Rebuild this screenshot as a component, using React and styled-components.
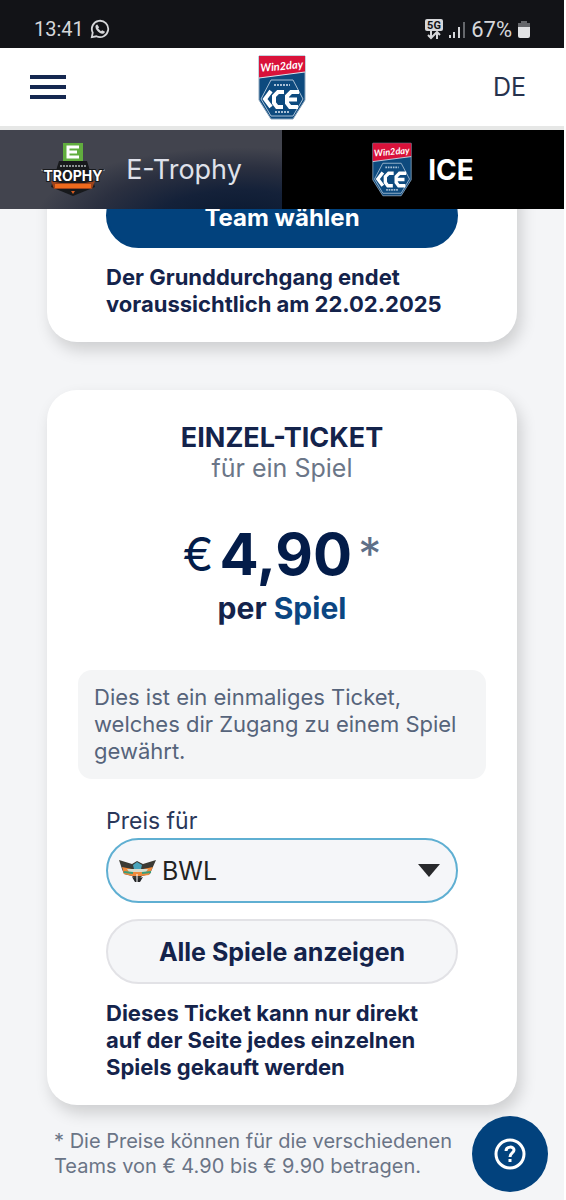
import { styled, createGlobalStyle } from "styled-components";

const GlobalStyle = createGlobalStyle`
  *, *::before, *::after {
    box-sizing: border-box;
  }
  body {
    margin: 0;
    background-color: #f4f5f7;
    color: #14234b;
    font-family: Inter, "Liberation Sans", sans-serif;
    font-size: 22px;
  }
  button, select {
    font: inherit;
  }
`;

const Page = styled.div`
  min-height: 100vh;
  border-right: 2px solid #fff;
`;

const Top = styled.div`
  position: sticky;
  top: 0;
  z-index: 2;
`;

const StatusBar = styled.div`
  display: flex;
  align-items: center;
  justify-content: space-between;
  height: 48px;
  padding: 10px 34px 0 34px;
  background-color: #121317;
  color: #d6d7da;
  font-family: Roboto, sans-serif;
  font-size: 22px;
`;

const StatusGroup = styled.div`
  display: flex;
  align-items: center;
  gap: 6px;
`;

const Time = styled.span`
  font-size: 20px;
`;

const Header = styled.header`
  display: grid;
  grid-template-columns: 1fr auto 1fr;
  align-items: center;
  height: 82px;
  padding: 0 30px;
  background-color: #fff;
  border-bottom: 4px solid #e6e7e6;
`;

const IconButton = styled.button`
  display: flex;
  justify-self: start;
  padding: 0;
  border: 0;
  background: none;
  cursor: pointer;
`;

const Language = styled.button`
  justify-self: end;
  padding: 0 8px;
  border: 0;
  background: none;
  color: #26324d;
  font-size: 25px;
  cursor: pointer;
`;

const Tabs = styled.nav`
  display: grid;
  grid-template-columns: 1fr 1fr;
`;

const Tab = styled.a`
  display: flex;
  align-items: center;
  justify-content: center;
  gap: ${(props) => (props.$active ? 16 : 20)}px;
  height: 79px;
  color: ${(props) => (props.$active ? "#fff" : "#dfe1ea")};
  font-size: ${(props) => (props.$active ? 28 : 27)}px;
  font-weight: ${(props) => (props.$active ? 700 : 400)};
  text-decoration: none;
  background: ${(props) =>
    props.$active
      ? "#000"
      : "radial-gradient(ellipse 72% 90% at 85% 112%, #0a1930 0%, #142139 40%, #2b3040 72%, #42444e 100%)"};
`;

const Main = styled.main`
  display: flex;
  flex-direction: column;
  gap: 48px;
  margin-top: -79px;
  padding: 0 47px;
`;

const Card = styled.section`
  padding: ${(props) => (props.$first ? 53 : 34)}px 59px 24px;
  border-radius: 30px;
  background-color: #fff;
  box-shadow: 4px 8px 16px rgba(0, 0, 0, 0.16);
`;

const Button = styled.button`
  display: block;
  width: 100%;
  height: 65px;
  padding: ${(props) => (props.$primary ? 4 : 0)}px 16px 0;
  border: 2px solid ${(props) => (props.$primary ? "#02427d" : "#e2e2e6")};
  border-radius: 33px;
  background-color: ${(props) => (props.$primary ? "#02427d" : "#f5f6f8")};
  color: ${(props) => (props.$primary ? "#fff" : "#14234b")};
  font-size: ${(props) => (props.$primary ? 24 : 25)}px;
  font-weight: 700;
  cursor: pointer;
`;

const Note = styled.p`
  margin: 16px 0 0;
  padding-right: 8px;
  font-size: 22px;
  font-weight: 700;
  line-height: 27px;
`;

const Title = styled.h2`
  margin: 0;
  font-size: 27px;
  font-weight: 700;
  line-height: 28px;
  text-align: center;
`;

const Subtitle = styled.p`
  margin: 0;
  color: #6b7688;
  font-size: 25px;
  line-height: 32px;
  text-align: center;
`;

const Price = styled.p`
  display: flex;
  align-items: center;
  justify-content: center;
  gap: 6px;
  margin: 38px 0 0;
  color: #031c49;
  font-size: 58px;
  font-weight: 700;
  line-height: 64px;
`;

const Currency = styled.span`
  font-size: 46px;
  font-weight: 400;
`;

const Star = styled.span`
  color: #5f7088;
  font-size: 46px;
  font-weight: 400;
`;

const Per = styled.p`
  margin: 6px 0 0;
  font-size: 30px;
  font-weight: 700;
  line-height: 32px;
  text-align: center;

  span {
    color: #0b4682;
  }
`;

const Info = styled.p`
  margin: 46px -28px 28px;
  padding: 14px 16px;
  border-radius: 14px;
  background-color: #f4f5f6;
  color: #56647b;
  font-size: 22px;
  line-height: 27px;
`;

const Label = styled.label`
  display: block;
  margin-bottom: 3px;
  color: #2a375a;
  font-size: 23px;
  line-height: 28px;
`;

const SelectBox = styled.div`
  display: flex;
  align-items: center;
  gap: 6px;
  height: 65px;
  margin-bottom: 16px;
  padding: 0 16px 0 11px;
  border: 2px solid #5fafd2;
  border-radius: 33px;
  background-color: #f5f6f9;
`;

const Select = styled.select`
  flex: 1;
  min-width: 0;
  padding: 0;
  border: 0;
  appearance: none;
  background: none;
  color: #222;
  font-size: 25px;
  outline: none;
`;

const Footnote = styled.p`
  margin: 24px 54px 0;
  color: #6a7486;
  font-size: 20px;
  line-height: 25px;
`;

const HelpButton = styled.button`
  position: fixed;
  right: 18px;
  bottom: 8px;
  display: flex;
  align-items: center;
  justify-content: center;
  width: 76px;
  height: 76px;
  padding: 0;
  border: 0;
  border-radius: 50%;
  background-color: #02427d;
  cursor: pointer;
`;

function LeagueLogo({ width, height }) {
  return (
    <svg width={width} height={height} viewBox="0 0 48 65" aria-hidden="true">
      <path d="M1 1h46v44L35 64H13L1 45z" fill="#0d4a7e" stroke="#8ba5bd" />
      <path d="M1 1h46v16L1 23z" fill="#d9123a" />
      <path d="M1 23l46-6" stroke="#dbe3ec" />
      <text x="24" y="15" textAnchor="middle" fill="#fff" fontSize="11" fontWeight="700" fontStyle="italic" fontFamily="Lato, sans-serif" transform="rotate(-5 24 14)">Win2day</text>
      <path d="M13 25h22l10 19-10 17H13L3 44z" fill="none" stroke="#a9c0d5" />
      <path d="M16 30h16M17 57h14" stroke="#a9c0d5" strokeWidth="2" strokeDasharray="2 1" />
      <path d="M13 36l-6 8 6 8" fill="none" stroke="#fff" strokeWidth="4" />
      <path d="M26 37h-6l-4 4v7l3 4h6" fill="none" stroke="#fff" strokeWidth="4" />
      <path d="M41 37h-8l-4 4v7l3 4h8M29 44.500h10" fill="none" stroke="#fff" strokeWidth="4" />
    </svg>
  );
}

function TrophyLogo() {
  return (
    <svg width="66" height="54" viewBox="0 0 66 54" aria-hidden="true">
      <path d="M19 18h28l8 26-22 9-22-9z" fill="#17191c" />
      <path d="M20 23h26" stroke="#8b9193" strokeWidth="2" strokeDasharray="2 1" />
      <path d="M23 0h20v18H23z" fill="#61ad3e" />
      <path d="M39 4H28v10h11M28 9h9" fill="none" stroke="#fff" strokeWidth="3" />
      <path d="M11 38l10 2h24l10-2-3 8H14z" fill="#9b431c" />
      <path d="M15 41h36v4H15z" fill="#ee6a1d" />
      <path d="M1 27l6 2M65 27l-6 2" stroke="#8b9193" />
      <text x="33" y="38" textAnchor="middle" fill="#fff" stroke="#17191c" strokeWidth="2" paintOrder="stroke" fontSize="14" fontWeight="700" fontFamily="Inter, sans-serif">TROPHY</text>
      <path d="M31 48h4l-2 3z" fill="#d65b20" />
    </svg>
  );
}

function TeamLogo() {
  return (
    <svg width="37" height="24" viewBox="0 0 37 24" aria-hidden="true">
      <path d="M0 1l13 4 5-3 6 3 13-4-4 9-2 5-8 2-5 6-5-6-8-2-2-5z" fill="#3b3a34" />
      <path d="M3 8l10 2h11l10-2-4 8-8 1H13l-8-2z" fill="#ef8a3c" />
      <path d="M8 10h21l-2 3H10z" fill="#d7dccd" />
      <path d="M14 6l4-3 5 3-1 4h-7z" fill="#4aa5bc" />
      <path d="M5 13l9 1M32 13l-9 1" stroke="#3b9d77" strokeWidth="2" />
      <path d="M13 18l5 2 6-2-3 5h-5z" fill="#262729" />
      <path d="M18 15v8" stroke="#fff" />
    </svg>
  );
}

export default function App() {
  return (
    <>
      <GlobalStyle />
      <Page>
        <Top>
          <StatusBar>
            <StatusGroup>
              <Time>13:41</Time>
              <svg width="20" height="20" viewBox="0 0 22 22" fill="none" aria-hidden="true">
                <path d="M2 20l1-5A9 9 0 1 1 7 19z" stroke="#d6d7da" strokeWidth="2" />
                <path d="M8 6l2 3-1 1.500 3 3 1.500-1 3 1.500c-1 3-4 2.500-6 1C8 13.500 6 11 6 8.500 6 7 7 6 8 6z" fill="#d6d7da" />
              </svg>
            </StatusGroup>
            <StatusGroup>
              <svg width="18" height="21" viewBox="0 0 18 21" aria-hidden="true">
                <rect width="18" height="12" rx="2" fill="#d6d7da" />
                <text x="9" y="10" textAnchor="middle" fontSize="11" fontWeight="700" fontFamily="Roboto, sans-serif" fill="#121317">5G</text>
                <path d="M6 12v7M3 16l3 3 3-3M12 20v-7M9 16l3-3 3 3" fill="none" stroke="#d6d7da" strokeWidth="2" />
              </svg>
              <svg width="16" height="17" viewBox="0 0 16 17" aria-hidden="true">
                <path d="M1 17v-3M5 17v-6M10 17V6" stroke="#d6d7da" strokeWidth="2" />
                <path d="M15 17V1" stroke="#65676b" strokeWidth="2" />
              </svg>
              <span>67%</span>
              <svg width="12" height="17" viewBox="0 0 12 17" aria-hidden="true">
                <path d="M3 0h6v2h3v5H0V2h3z" fill="#65676b" />
                <path d="M0 6h12v9a2 2 0 0 1-2 2H2a2 2 0 0 1-2-2z" fill="#e2e3e5" />
              </svg>
            </StatusGroup>
          </StatusBar>
          <Header>
            <IconButton aria-label="Menü">
              <svg width="36" height="24" viewBox="0 0 36 24" aria-hidden="true">
                <path d="M0 2h36M0 12h36M0 22h36" stroke="#152850" strokeWidth="4" />
              </svg>
            </IconButton>
            <LeagueLogo width={48} height={65} />
            <Language>DE</Language>
          </Header>
          <Tabs>
            <Tab href="#e-trophy">
              <TrophyLogo />
              E-Trophy
            </Tab>
            <Tab href="#ice" $active>
              <LeagueLogo width={40} height={55} />
              ICE
            </Tab>
          </Tabs>
        </Top>
        <Main>
          <Card $first>
            <Button $primary>Team wählen</Button>
            <Note>Der Grunddurchgang endet voraussichtlich am 22.02.2025</Note>
          </Card>
          <Card>
            <Title>EINZEL-TICKET</Title>
            <Subtitle>für ein Spiel</Subtitle>
            <Price>
              <Currency>€</Currency>
              4,90
              <Star>*</Star>
            </Price>
            <Per>
              per <span>Spiel</span>
            </Per>
            <Info>Dies ist ein einmaliges Ticket, welches dir Zugang zu einem Spiel gewährt.</Info>
            <Label htmlFor="team">Preis für</Label>
            <SelectBox>
              <TeamLogo />
              <Select id="team" defaultValue="BWL">
                <option value="BWL">BWL</option>
              </Select>
              <svg width="22" height="13" viewBox="0 0 22 13" aria-hidden="true">
                <path d="M0 0h22L11 13z" fill="#28292c" />
              </svg>
            </SelectBox>
            <Button>Alle Spiele anzeigen</Button>
            <Note>Dieses Ticket kann nur direkt auf der Seite jedes einzelnen Spiels gekauft werden</Note>
          </Card>
        </Main>
        <Footnote>
          * Die Preise können für die verschiedenen Teams von € 4.90 bis € 9.90 betragen.
        </Footnote>
        <HelpButton aria-label="Hilfe">
          <svg width="32" height="32" viewBox="0 0 32 32" fill="none" stroke="#fff" strokeWidth="3" aria-hidden="true">
            <circle cx="16" cy="16" r="14" />
            <path d="M12 13c0-5 8-5 8-1 0 3-4 3-4 7" />
            <path d="M16 21v3" />
          </svg>
        </HelpButton>
      </Page>
    </>
  );
}
